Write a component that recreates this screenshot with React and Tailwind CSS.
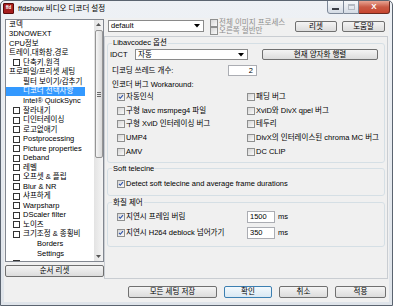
const tree = [
  { t: "코덱", cls: "pl-[3px]" },
  { t: "3DNOWEXT", cls: "pl-[3px]" },
  { t: "CPU정보", cls: "pl-[3px]" },
  { t: "트레이,대화창,경로", cls: "pl-[3px]" },
  { t: "단축키,원격", cb: true },
  { t: "프로파일/프리셋 세팅", cls: "pl-[3px]" },
  { t: "필터 보이기/감추기", cls: "pl-[17px]" },
  { t: "디코더 선택사항", cls: "pl-[17px]", sel: true },
  { t: "Intel® QuickSync", cls: "pl-[17px]" },
  { t: "잘라내기", cb: true },
  { t: "디인터레이싱", cb: true },
  { t: "로고없애기", cb: true },
  { t: "Postprocessing", cb: true },
  { t: "Picture properties", cb: true },
  { t: "Deband", cb: true },
  { t: "레벨", cb: true },
  { t: "오프셋 & 플립", cb: true },
  { t: "Blur & NR", cb: true },
  { t: "샤프하게", cb: true },
  { t: "Warpsharp", cb: true },
  { t: "DScaler filter", cb: true },
  { t: "노이즈", cb: true },
  { t: "크기조정 & 종횡비", cb: true },
  { t: "Borders", cls: "pl-[31px]" },
  { t: "Settings", cls: "pl-[31px]" },
  { t: "", cb: true },
];

const bugs = [
  ["자동인식", true, "패딩 버그"],
  ["구형 lavc msmpeg4 파일", false, "XviD와 DivX qpel 버그"],
  ["구형 XviD 인터레이싱 버그", false, "테두리"],
  ["UMP4", false, "DivX의 인터레이스된 chroma MC 버그"],
  ["AMV", false, "DC CLIP"],
];

const Box = ({ checked }) => (
  <span className="relative shrink-0 w-[8px] h-[8px] border border-[#8e8f8f] bg-gradient-to-br from-[#d6d6d6] to-[#fafafa]">
    {checked && (
      <svg viewBox="0 0 8 8" className="absolute inset-0 w-full h-full">
        <path d="M1.3 3.8 L3.1 5.7 L6.6 1.4" fill="none" stroke="#2a4fa8" strokeWidth="1.4" />
      </svg>
    )}
  </span>
);

const Check = ({ label, checked, gray }) => (
  <div className="flex items-center gap-[1px] whitespace-nowrap">
    <Box checked={checked} />
    <span className={gray ? "text-[#8d8d8d]" : "text-black"}>{label}</span>
  </div>
);

const Btn = ({ children, className, focus }) => (
  <div
    className={`flex items-center justify-center rounded-[2px] border ${
      focus
        ? "border-[#3c7fb1] bg-gradient-to-b from-[#f3f9fd] to-[#d9e8f3]"
        : "border-[#707070] bg-gradient-to-b from-[#f4f4f4] to-[#dcdcdc]"
    } ${className}`}
  >
    {children}
  </div>
);

const Arrow = () => (
  <svg viewBox="0 0 6 4" className="w-[6px] h-[4px]">
    <polygon points="0,0 6,0 3,3.5" fill="#000" />
  </svg>
);

const Combo = ({ value, className }) => (
  <div className={`flex items-center border border-[#8a8a8a] bg-white pl-[2px] pr-[3px] ${className}`}>
    <span className="flex-1">{value}</span>
    <Arrow />
  </div>
);

const Field = ({ className }) => <div className={`border border-[#abadb3] bg-white ${className}`} />;

export default function App() {
  return (
    <div className="w-[393px] h-[306px] flex flex-col bg-gradient-to-b from-[#eef1f5] to-[#dfe4ea] border border-[#5b6470] rounded-t-[5px] overflow-hidden text-[7.5px] leading-[10px] text-black [font-family:'Liberation_Sans','Noto_Sans_CJK_KR',sans-serif]">
      <div className="h-[17px] shrink-0 flex">
        <div className="ml-[2px] mt-[2px] w-[11px] h-[11px] rounded-[1px] bg-[#a51d1d] border border-[#5a0a0a] flex items-center justify-center text-[4.5px] leading-none font-bold text-white">
          ffd
        </div>
        <span className="ml-[4px] mt-[3px] text-[7.5px]">ffdshow 비디오 디코더 설정</span>
        <div className="ml-auto mr-[2px] flex self-start -mt-[1px]">
          <div className="w-[17px] h-[14px] rounded-bl-[3px] border border-[#7d8898] bg-gradient-to-b from-[#f6f8fa] to-[#d4dbe4] flex items-end justify-center pb-[3px]">
            <div className="w-[7px] h-[2px] bg-[#3a3f47]" />
          </div>
          <div className="w-[15px] h-[14px] border-y border-r border-[#7d8898] bg-gradient-to-b from-[#f6f8fa] to-[#d4dbe4] flex items-center justify-center">
            <div className="w-[7px] h-[6px] border border-t-2 border-[#b4bac3]" />
          </div>
          <div className="w-[31px] h-[14px] rounded-br-[3px] border-y border-r border-[#6b2a20] bg-gradient-to-b from-[#e8a493] via-[#c95a45] to-[#c8452f] flex items-center justify-center text-white text-[8px] font-bold leading-none">
            X
          </div>
        </div>
      </div>

      <div className="ml-[3px] w-[385px] h-[284px] shrink-0 bg-[#f0f0f0] flex flex-col">
        <div className="flex pt-[1px] pl-[1px]">
          <div className="w-[99px] flex flex-col">
            <div className="h-[243px] border border-[#828790] bg-white flex">
              <div className="flex-1 overflow-hidden">
                {tree.map((r, i) => (
                  <div key={i} className="h-[9.54px] flex items-center whitespace-nowrap">
                    {r.cb ? (
                      <div className="flex items-center pl-[7px] gap-[3px]">
                        <span className="w-[7px] h-[7px] border border-[#333] bg-white" />
                        <span>{r.t}</span>
                      </div>
                    ) : r.sel ? (
                      <div className={`w-[79px] h-full flex items-center bg-[#3399ff] text-white ${r.cls}`}>{r.t}</div>
                    ) : (
                      <div className={r.cls}>{r.t}</div>
                    )}
                  </div>
                ))}
              </div>
              <div className="w-[9px] flex flex-col bg-gradient-to-r from-[#e3e3e3] to-[#f4f4f4]">
                <div className="h-[9px] flex items-center justify-center">
                  <svg viewBox="0 0 5 3" className="w-[5px] h-[3px]">
                    <polygon points="0,3 5,3 2.5,0" fill="#555" />
                  </svg>
                </div>
                <div className="mt-[1px] h-[128px] mx-[0.5px] rounded-[2px] border border-[#959595] bg-gradient-to-r from-[#f5f5f5] to-[#d9d9d9] flex flex-col items-center justify-center gap-[1px]">
                  <div className="w-[4px] h-[1px] bg-[#6a6a6a]" />
                  <div className="w-[4px] h-[1px] bg-[#6a6a6a]" />
                  <div className="w-[4px] h-[1px] bg-[#6a6a6a]" />
                </div>
                <div className="flex-1" />
                <div className="h-[9px] flex items-center justify-center">
                  <svg viewBox="0 0 5 3" className="w-[5px] h-[3px]">
                    <polygon points="0,0 5,0 2.5,3" fill="#555" />
                  </svg>
                </div>
              </div>
            </div>
            <Btn className="mt-[3px] h-[12px]">순서 리셋</Btn>
          </div>

          <div className="w-[284px] flex flex-col">
            <div className="h-[17px] flex items-start">
              <Combo value="default" className="ml-[4px] mt-[1px] w-[96px] h-[12px]" />
              <div className="ml-[6px] w-[85px] flex flex-col">
                <div className="h-[8px] flex items-center">
                  <Check label="전체 이미지 프로세스" gray />
                </div>
                <div className="h-[8px] flex items-center">
                  <Check label="오른쪽 절반만" gray />
                </div>
              </div>
              <Btn className="mt-[2px] w-[42px] h-[11px]">리셋</Btn>
              <Btn className="mt-[2px] ml-[5px] w-[43px] h-[11px]">도움말</Btn>
            </div>

            <div className="h-[243px] border border-[#c9cdd2] flex flex-col px-[2px]">
              <fieldset className="mt-[1px] border border-[#d5dfe5] rounded-[3px] pb-[3px]">
                <legend className="ml-[4px] px-[1px] h-[10px]">Libavcodec 옵션</legend>
                <div className="mt-[1px] h-[11px] flex items-center">
                  <span className="pl-[2px] w-[27px]">IDCT</span>
                  <Combo value="자동" className="w-[113px] h-[11px]" />
                  <Btn className="ml-[14px] w-[116px] h-[11px]">현재 양자화 행렬</Btn>
                </div>
                <div className="mt-[5px] h-[11px] flex items-center">
                  <span className="pl-[4px] w-[120px]">디코딩 쓰레드 개수:</span>
                  <div className="w-[29px] h-[11px] border border-[#abadb3] bg-white text-right pr-[3px]">2</div>
                </div>
                <div className="mt-[4px] h-[10px] flex items-center pl-[4px]">인코더 버그 Workaround:</div>
                <div className="pl-[9px] grid grid-cols-[130px_1fr]">
                  {bugs.map(([a, c, b]) => [
                    <div key={a} className="h-[13.75px] flex items-center">
                      <Check label={a} checked={c} />
                    </div>,
                    <div key={b} className="h-[13.75px] flex items-center">
                      <Check label={b} />
                    </div>,
                  ])}
                </div>
              </fieldset>

              <fieldset className="mt-[1px] border border-[#d5dfe5] rounded-[3px] pb-[6px]">
                <legend className="ml-[4px] px-[1px] h-[10px]">Soft telecine</legend>
                <div className="mt-[5px] h-[10px] flex items-center pl-[9px]">
                  <Check label="Detect soft telecine and average frame durations" checked />
                </div>
              </fieldset>

              <fieldset className="mt-[2px] border border-[#d5dfe5] rounded-[3px] pb-[7px]">
                <legend className="ml-[4px] px-[1px] h-[10px]">화질 제어</legend>
                <div className="mt-[3px] h-[12px] flex items-center pl-[9px]">
                  <div className="w-[130px]">
                    <Check label="지연시 프레임 버림" checked />
                  </div>
                  <div className="w-[28px] h-[12px] border border-[#abadb3] bg-white pl-[2px] flex items-center">1500</div>
                  <span className="ml-[3px]">ms</span>
                </div>
                <div className="mt-[4px] h-[12px] flex items-center pl-[9px]">
                  <div className="w-[130px]">
                    <Check label="지연시 H264 deblock 넘어가기" checked />
                  </div>
                  <div className="w-[28px] h-[12px] border border-[#abadb3] bg-white pl-[2px] flex items-center">350</div>
                  <span className="ml-[3px]">ms</span>
                </div>
              </fieldset>
            </div>
          </div>
        </div>

        <div className="mt-[7px] h-[12px] flex justify-end gap-[7px] pr-[3px]">
          <Btn className="w-[89px]">모든 세팅 저장</Btn>
          <Btn className="w-[48px]" focus>확인</Btn>
          <Btn className="w-[49px]">취소</Btn>
          <Btn className="w-[51px]">적용</Btn>
        </div>
      </div>
    </div>
  );
}
